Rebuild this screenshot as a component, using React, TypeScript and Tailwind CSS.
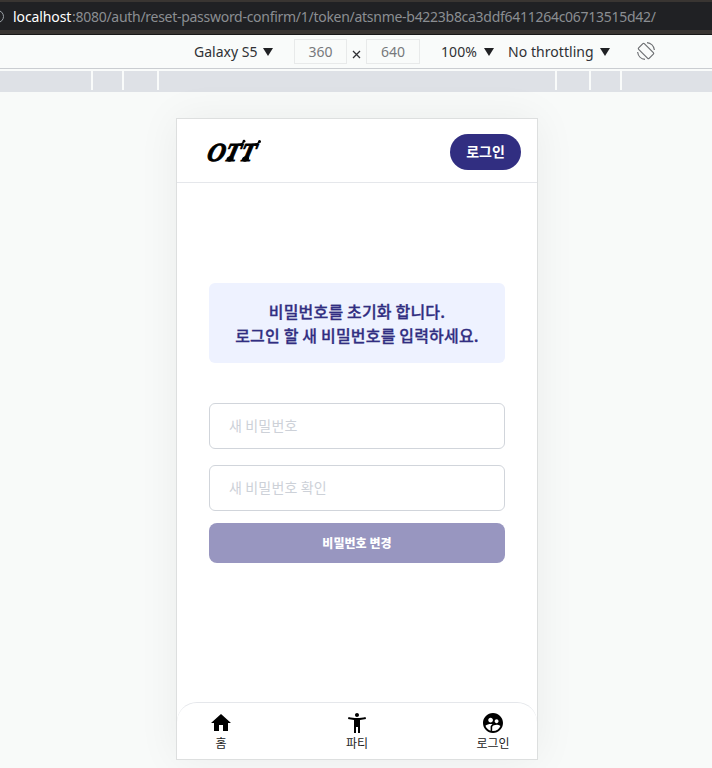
import React from 'react';
import { MdAccessibilityNew, MdHome, MdSupervisedUserCircle } from 'react-icons/md';

const latin = "font-['Noto_Sans','Open_Sans',sans-serif]";

function AddressBar() {
  return (
    <div className={`flex h-[35px] items-center overflow-hidden border-b border-[#171717] bg-[#393532] pt-[2px] pb-[4px] ${latin}`}>
      <div className="flex h-[28px] w-full items-center bg-[#202124]">
        <span className="-ml-[9px] size-[13px] shrink-0 rounded-full border border-[#9aa0a6]" />
        <span className="ml-[9px] w-[59px] shrink-0 text-[14px] tracking-[-0.1px] whitespace-nowrap text-white">localhost</span>
        <span className="text-[14px] tracking-[-0.28px] whitespace-nowrap text-[#8b8e92]">:8080/auth/reset-password-confirm/1/token/atsnme-b4223b8ca3ddf6411264c06713515d42/</span>
      </div>
    </div>
  );
}

function Caret() {
  return (
    <svg width="10" height="8" viewBox="0 0 10 8" className="shrink-0">
      <path d="M0 0h10L5 8z" fill="#202124" />
    </svg>
  );
}

function DeviceToolbar() {
  return (
    <div className={`flex h-[34px] items-center border-b border-[#cacdd1] bg-[#f9fbfa] pl-[194px] text-[14px] whitespace-nowrap text-[#303134] ${latin}`}>
      <span className="w-[69px]">Galaxy S5</span>
      <Caret />
      <span className="ml-[21px] flex h-[25px] w-[53px] items-center justify-center border border-[#e8eaea] text-[#77797c]">360</span>
      <svg width="9" height="9" viewBox="0 0 9 9" className="mt-[5px] ml-[5px]">
        <path d="M1 1l7 7M8 1L1 8" stroke="#303134" strokeWidth="1.3" />
      </svg>
      <span className="ml-[5px] flex h-[25px] w-[54px] items-center justify-center border border-[#e8eaea] text-[#77797c]">640</span>
      <span className="ml-[21px] w-[43px] tracking-[0.1px]">100%</span>
      <Caret />
      <span className="ml-[14px] w-[92px] tracking-[0.05px]">No throttling</span>
      <Caret />
      <svg width="20" height="20" viewBox="0 0 20 20" fill="none" stroke="#6e7073" strokeWidth="1.2" className="mb-[1px] ml-[26px]">
        <rect x="6" y="2.6" width="8" height="14.8" rx="1" transform="rotate(-45 10 10)" />
        <path d="M11 1.6a8.5 8.5 0 0 1 7.4 7.4M9 18.4a8.5 8.5 0 0 1-7.4-7.4" />
      </svg>
    </div>
  );
}

function BreakpointRuler() {
  return (
    <div className="flex h-[23px] gap-[2px] border-t-2 border-[#f9fbfa] bg-[#dee1e6]">
      <div className="w-[91px]" />
      <div className="-ml-[2px] h-[19px] w-[2px] bg-[#f9fbfa]" />
      <div className="ml-[27px] h-[19px] w-[2px] bg-[#f9fbfa]" />
      <div className="ml-[31px] h-[19px] w-[2px] bg-[#f9fbfa]" />
      <div className="ml-[394px] h-[19px] w-[2px] bg-[#f9fbfa]" />
      <div className="ml-[30px] h-[19px] w-[2px] bg-[#f9fbfa]" />
      <div className="ml-[27px] h-[19px] w-[2px] bg-[#f9fbfa]" />
    </div>
  );
}

function Logo() {
  return (
    <svg width="60" height="30" viewBox="0 0 60 30" aria-label="OTT" className="ml-[27px]">
      <text x="8" y="25" fontSize="26" fontFamily="'Liberation Serif', serif" fontWeight="700" fontStyle="italic" textLength="48" lengthAdjust="spacingAndGlyphs" stroke="#000" strokeWidth="1" transform="skewX(-14)">OTT</text>
      <g fill="none" stroke="#000" strokeLinecap="round" strokeWidth="1.6">
        <path d="M34 8.5q5 0 6-3.5" />
        <path d="M48 8.5q6 0 7.5-3" />
      </g>
      <circle cx="40" cy="5.2" r="1.4" />
      <circle cx="55.5" cy="5.5" r="1.5" />
      <ellipse cx="26" cy="22.8" rx="3.6" ry="2.6" transform="rotate(-25 26 22.8)" />
      <ellipse cx="41.5" cy="22.8" rx="3.6" ry="2.6" transform="rotate(-25 41.5 22.8)" />
    </svg>
  );
}

function NavItem({ icon, label }: { icon: React.ReactNode; label: string }) {
  return (
    <a className="flex w-[88px] flex-col items-center text-[12px] leading-[16px] text-black">
      {icon}
      <span className="whitespace-nowrap text-[#222]">{label}</span>
    </a>
  );
}

const inputClass =
  'h-[46px] w-full rounded-[6px] border border-[#d1d5db] bg-white px-[19px] pb-[2px] text-[14px] tracking-[0.15px] text-gray-700 placeholder:text-[#cdd1d8] placeholder:opacity-100 outline-none';

export default function App() {
  return (
    <div className="flex h-[768px] w-[712px] flex-col overflow-hidden bg-[#f8faf9]">
      <AddressBar />
      <DeviceToolbar />
      <BreakpointRuler />
      <div className="mt-[26px] ml-[176px] flex h-[642px] w-[362px] shrink-0 flex-col border border-[#dddfdf] bg-white font-['Noto_Sans_CJK_KR',sans-serif] shadow-[0_0_40px_rgba(0,0,0,0.06)]">
        <header className="flex h-[64px] shrink-0 items-center justify-between border-b border-[#e5e7eb] pr-[16px]">
          <Logo />
          <button className="mt-[2px] h-[36px] w-[71px] rounded-full bg-[#312e81] text-[14px] font-bold text-white">로그인</button>
        </header>
        <main className="flex flex-1 flex-col px-[32px] pt-[100px]">
          <div className="flex h-[80px] flex-col justify-center rounded-[6px] bg-[#eef2ff] text-center text-[16px] leading-[24px] font-medium tracking-[0.18px] text-[#312e81] [-webkit-text-stroke:0.3px_#312e81]">
            <p>비밀번호를 초기화 합니다.</p>
            <p>로그인 할 새 비밀번호를 입력하세요.</p>
          </div>
          <input className={`mt-[40px] ${inputClass}`} placeholder="새 비밀번호" />
          <input className={`mt-[16px] ${inputClass}`} placeholder="새 비밀번호 확인" />
          <button className="mt-[12px] h-[40px] rounded-[8px] bg-[#9896c0] text-[12px] font-black tracking-[0.05px] text-white">비밀번호 변경</button>
        </main>
        <nav className="flex h-[57px] shrink-0 justify-between rounded-t-[20px] border-t border-[#e5e7eb] pt-[8px]">
          <NavItem icon={<MdHome size={24} />} label="홈" />
          <NavItem icon={<MdAccessibilityNew size={24} />} label="파티" />
          <NavItem icon={<MdSupervisedUserCircle size={24} />} label="로그인" />
        </nav>
      </div>
    </div>
  );
}
